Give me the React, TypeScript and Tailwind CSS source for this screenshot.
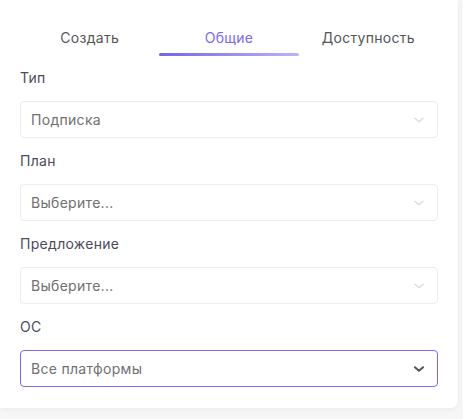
import {useState} from "react";

const ChevronDown = ({active}: {active?: boolean}) => (
    <svg width="14" height="14" viewBox="0 0 24 24" fill="none"
         stroke={active ? "#555555" : "#dcdcdc"} strokeWidth={active ? 3.5 : 2.5}
         strokeLinecap="round" strokeLinejoin="round">
        <path d="M5 9l7 6 7-6"/>
    </svg>
);

const Field = ({label, value, active}: {label: string; value: string; active?: boolean}) => (
    <div className="flex flex-col">
        <div className="text-[14px] leading-5 tracking-[0.3px] text-[#4b4b5c]">{label}</div>
        <div className={`mt-[13px] h-[37px] flex items-center justify-between pl-[10px] pr-[11px] rounded-[4px] border bg-white ${active ? "border-[#7b68ee]" : "border-[#ececec]"}`}>
            <span className="text-[14px] tracking-[0.3px] text-[#707070]">{value}</span>
            <ChevronDown active={active}/>
        </div>
    </div>
);

const tabs = ["Создать", "Общие", "Доступность"];

const App = () => {
    const [tab, setTab] = useState(1);
    return (
        <div className="w-[463px] h-[419px] bg-[#f6f6f6] overflow-hidden" style={{fontFamily: "Inter, 'Noto Sans', sans-serif"}}>
            <div className="w-[458px] h-[408px] bg-white rounded-br-[8px] shadow-[0_1px_6px_rgba(0,0,0,0.06)] px-5 pt-7">
                <div className="grid grid-cols-3">
                    {tabs.map((t, i) => (
                        <button key={t} onClick={() => setTab(i)} className="flex flex-col items-center">
                            <span className={`text-[14px] leading-5 tracking-[0.3px] ${i === tab ? "text-[#7b68ee]" : "text-[#555555]"}`}>{t}</span>
                            <span className={`mt-[5px] h-[3px] w-full rounded-full ${i === tab ? "bg-gradient-to-r from-[#7464e4] to-[#bcb3f6]" : "bg-transparent"}`}/>
                        </button>
                    ))}
                </div>
                <div className="mt-3 flex flex-col gap-[13px]">
                    <Field label="Тип" value="Подписка"/>
                    <Field label="План" value="Выберите..."/>
                    <Field label="Предложение" value="Выберите..."/>
                    <Field label="ОС" value="Все платформы" active/>
                </div>
            </div>
        </div>
    )
}
export default App;
